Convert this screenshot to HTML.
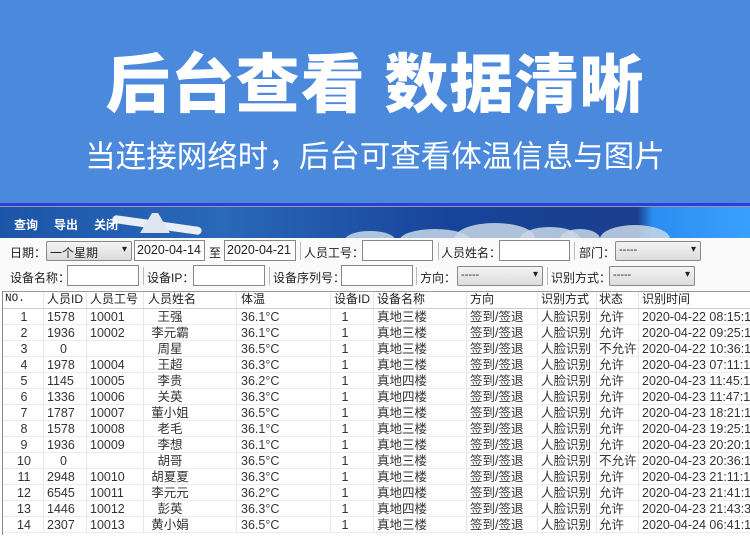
<!DOCTYPE html><html><head><meta charset="utf-8"><style>
*{margin:0;padding:0;box-sizing:border-box}
body{width:750px;height:543px;overflow:hidden;background:#fff;font-family:"Liberation Sans","Noto Sans CJK SC",sans-serif;position:relative;color:#333}
.hero{position:absolute;left:0;top:0;width:750px;height:203px;background:#4a89dc}
.t1{position:absolute;left:0;width:750px;top:50px;text-align:center;color:#fff;font-size:64px;font-weight:900;letter-spacing:1px;line-height:70px}
.t2{position:absolute;left:0;width:750px;top:137px;text-align:center;color:#fff;font-size:30.5px;line-height:40px}
.line{position:absolute;left:0;top:203px;width:750px;height:4px;background:#2c3fd8;border-bottom:1px solid #99a}
.banner{position:absolute;left:0;top:207px;width:750px;height:31px;background:linear-gradient(90deg,#1c55a8 0%,#2a68b8 30%,#17449a 60%,#1a3f8c 85%,#2b8ef0 87%,#3aa0ff 100%);overflow:hidden}
.cloud{position:absolute;background:#c9d8e8;border-radius:50%;opacity:.85}
.menu{position:absolute;top:9px;color:#fff;font-size:12px;font-weight:bold}
.f{position:absolute;font-size:12px;color:#222}
.in{position:absolute;height:21px;border:1px solid #888;background:#fff;font-size:12.5px;padding:2px 2px;color:#222}
.sel{position:absolute;height:20px;border:1px solid #888;background:linear-gradient(#f4f4f4,#dcdcdc);font-size:11px;padding:2px 3px;color:#222;border-radius:2px}
.sel:after{content:"▾";position:absolute;right:4px;top:2px;font-size:10px}
.sep{position:absolute;width:1px;height:18px;background:#bbb}
.lb{position:absolute;left:2px;top:291px;width:1px;height:244px;background:#888}
.tb{position:absolute;left:2px;top:291px;width:748px;height:1px;background:#999}
.vl{position:absolute;top:292px;width:1px;height:241px;background:#e6e6e6}
.r{position:absolute;left:3px;width:747px;height:16px;border-bottom:1px solid #ececec;font-size:12.5px;line-height:17px;color:#333;overflow:hidden}
.r span{position:absolute;top:0;white-space:nowrap}
.r span:nth-child(1){left:0;width:40px;text-align:center;padding-left:2px}
.r span:nth-child(2){left:44px}
.r span:nth-child(3){left:87px}
.r span:nth-child(4){left:127px;width:80px;text-align:center}
.r span:nth-child(5){left:238px}
.r span:nth-child(6){left:327px;width:30px;text-align:center}
.r span:nth-child(7){left:374px}
.r span:nth-child(8){left:467px}
.r span:nth-child(9){left:538px}
.r span:nth-child(10){left:596px}
.r span:nth-child(11){left:639px}
.r.h{top:292px;height:17px;border-bottom:1px solid #ccc;color:#222;font-size:12px;line-height:15px}
.r.h span:nth-child(1){text-align:left;padding-left:2px;font-family:"Liberation Mono",monospace;font-size:11px}
.r.h span:nth-child(4){left:145px;width:auto;text-align:left}
.r.h span:nth-child(6){left:331px;width:auto}
.z{padding-left:13px}
</style></head><body>
<div class="hero"><div class="t1">后台查看 数据清晰</div><div class="t2">当连接网络时，后台可查看体温信息与图片</div></div>
<div class="line"></div>
<div class="banner">
<div class="cloud" style="left:400px;top:22px;width:70px;height:22px"></div>
<div class="cloud" style="left:455px;top:16px;width:80px;height:30px"></div>
<div class="cloud" style="left:520px;top:20px;width:60px;height:24px"></div>
<div class="cloud" style="left:560px;top:22px;width:40px;height:20px"></div>
<div class="cloud" style="left:600px;top:18px;width:70px;height:28px"></div>
<div class="cloud" style="left:345px;top:24px;width:50px;height:18px"></div>
<div style="position:absolute;left:112px;top:14px;width:90px;height:8px;background:#e8eef4;border-radius:4px;transform:rotate(8deg)"></div>
<div style="position:absolute;left:140px;top:6px;width:30px;height:20px;background:#dde5ee;clip-path:polygon(0 100%,40% 0,60% 0,100% 100%)"></div>
<span class="menu" style="left:14px">查询</span><span class="menu" style="left:54px">导出</span><span class="menu" style="left:94px">关闭</span>
</div>
<div style="position:absolute;left:0;top:238px;width:750px;height:52px;background:#fafafa"></div>
<span class="f" style="left:10px;top:244px">日期：</span>
<div class="sel" style="left:46px;top:241px;width:86px;font-size:12px">一个星期</div>
<div class="in" style="left:134px;top:240px;width:71px">2020-04-14</div>
<span class="f" style="left:209px;top:244px">至</span>
<div class="in" style="left:224px;top:240px;width:72px">2020-04-21</div>
<div class="sep" style="left:300px;top:242px"></div>
<span class="f" style="left:304px;top:244px">人员工号：</span>
<div class="in" style="left:362px;top:240px;width:71px"></div>
<div class="sep" style="left:438px;top:242px"></div>
<span class="f" style="left:441px;top:244px">人员姓名：</span>
<div class="in" style="left:499px;top:240px;width:71px"></div>
<div class="sep" style="left:574px;top:242px"></div>
<span class="f" style="left:579px;top:244px">部门：</span>
<div class="sel" style="left:615px;top:241px;width:86px">-----</div>
<span class="f" style="left:10px;top:269px">设备名称：</span>
<div class="in" style="left:67px;top:265px;width:72px"></div>
<div class="sep" style="left:143px;top:267px"></div>
<span class="f" style="left:147px;top:269px">设备IP：</span>
<div class="in" style="left:193px;top:265px;width:72px"></div>
<div class="sep" style="left:269px;top:267px"></div>
<span class="f" style="left:273px;top:269px">设备序列号：</span>
<div class="in" style="left:341px;top:265px;width:72px"></div>
<div class="sep" style="left:416px;top:267px"></div>
<span class="f" style="left:420px;top:269px">方向：</span>
<div class="sel" style="left:457px;top:266px;width:86px">-----</div>
<div class="sep" style="left:547px;top:267px"></div>
<span class="f" style="left:551px;top:269px">识别方式：</span>
<div class="sel" style="left:609px;top:266px;width:86px">-----</div>
<div class="tb"></div><div class="lb"></div>
<div class="vl" style="left:43px"></div><div class="vl" style="left:86px"></div><div class="vl" style="left:143px"></div><div class="vl" style="left:236px"></div><div class="vl" style="left:330px"></div><div class="vl" style="left:373px"></div><div class="vl" style="left:466px"></div><div class="vl" style="left:537px"></div><div class="vl" style="left:596px"></div><div class="vl" style="left:638px"></div>
<div class="r h"><span>NO.</span><span>人员ID</span><span>人员工号</span><span>人员姓名</span><span>体温</span><span>设备ID</span><span>设备名称</span><span>方向</span><span>识别方式</span><span>状态</span><span>识别时间</span></div>
<div class="r" style="top:309px"><span>1</span><span>1578</span><span>10001</span><span>王强</span><span>36.1°C</span><span>1</span><span>真地三楼</span><span>签到/签退</span><span>人脸识别</span><span>允许</span><span>2020-04-22 08:15:1</span></div>
<div class="r" style="top:325px"><span>2</span><span>1936</span><span>10002</span><span>李元霸</span><span>36.1°C</span><span>1</span><span>真地三楼</span><span>签到/签退</span><span>人脸识别</span><span>允许</span><span>2020-04-22 09:25:1</span></div>
<div class="r" style="top:341px"><span>3</span><span class="z">0</span><span></span><span>周星</span><span>36.5°C</span><span>1</span><span>真地三楼</span><span>签到/签退</span><span>人脸识别</span><span>不允许</span><span>2020-04-22 10:36:1</span></div>
<div class="r" style="top:357px"><span>4</span><span>1978</span><span>10004</span><span>王超</span><span>36.3°C</span><span>1</span><span>真地三楼</span><span>签到/签退</span><span>人脸识别</span><span>允许</span><span>2020-04-23 07:11:1</span></div>
<div class="r" style="top:373px"><span>5</span><span>1145</span><span>10005</span><span>李贵</span><span>36.2°C</span><span>1</span><span>真地四楼</span><span>签到/签退</span><span>人脸识别</span><span>允许</span><span>2020-04-23 11:45:1</span></div>
<div class="r" style="top:389px"><span>6</span><span>1336</span><span>10006</span><span>关英</span><span>36.3°C</span><span>1</span><span>真地四楼</span><span>签到/签退</span><span>人脸识别</span><span>允许</span><span>2020-04-23 11:47:1</span></div>
<div class="r" style="top:405px"><span>7</span><span>1787</span><span>10007</span><span>董小姐</span><span>36.5°C</span><span>1</span><span>真地三楼</span><span>签到/签退</span><span>人脸识别</span><span>允许</span><span>2020-04-23 18:21:1</span></div>
<div class="r" style="top:421px"><span>8</span><span>1578</span><span>10008</span><span>老毛</span><span>36.1°C</span><span>1</span><span>真地三楼</span><span>签到/签退</span><span>人脸识别</span><span>允许</span><span>2020-04-23 19:25:1</span></div>
<div class="r" style="top:437px"><span>9</span><span>1936</span><span>10009</span><span>李想</span><span>36.1°C</span><span>1</span><span>真地三楼</span><span>签到/签退</span><span>人脸识别</span><span>允许</span><span>2020-04-23 20:20:1</span></div>
<div class="r" style="top:453px"><span>10</span><span class="z">0</span><span></span><span>胡哥</span><span>36.5°C</span><span>1</span><span>真地三楼</span><span>签到/签退</span><span>人脸识别</span><span>不允许</span><span>2020-04-23 20:36:1</span></div>
<div class="r" style="top:469px"><span>11</span><span>2948</span><span>10010</span><span>胡夏夏</span><span>36.3°C</span><span>1</span><span>真地三楼</span><span>签到/签退</span><span>人脸识别</span><span>允许</span><span>2020-04-23 21:11:1</span></div>
<div class="r" style="top:485px"><span>12</span><span>6545</span><span>10011</span><span>李元元</span><span>36.2°C</span><span>1</span><span>真地四楼</span><span>签到/签退</span><span>人脸识别</span><span>允许</span><span>2020-04-23 21:41:1</span></div>
<div class="r" style="top:501px"><span>13</span><span>1446</span><span>10012</span><span>彭英</span><span>36.3°C</span><span>1</span><span>真地四楼</span><span>签到/签退</span><span>人脸识别</span><span>允许</span><span>2020-04-23 21:43:3</span></div>
<div class="r" style="top:517px"><span>14</span><span>2307</span><span>10013</span><span>黄小娟</span><span>36.5°C</span><span>1</span><span>真地三楼</span><span>签到/签退</span><span>人脸识别</span><span>允许</span><span>2020-04-24 06:41:1</span></div>
</body></html>
